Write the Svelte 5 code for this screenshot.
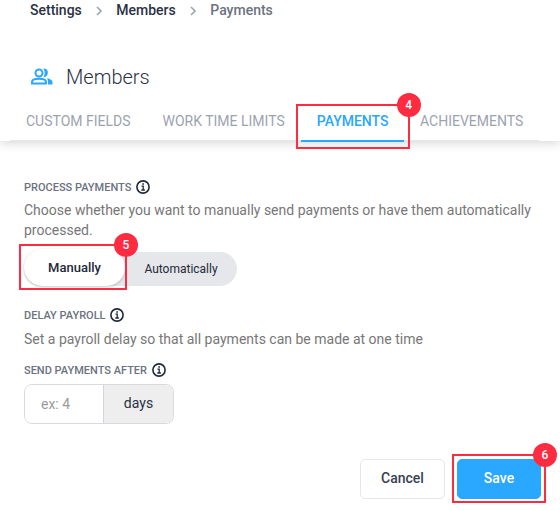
<script>
	let active = 'Payments';
	let mode = 'Manually';
	let delay = '';

	const tabs = ['Custom fields', 'Work time limits', 'Payments', 'Achievements'];
</script>

<style>
	:global(body) {
		min-height: 100vh;
		background: #fff;
		font-family: Roboto, sans-serif;
		color: #2a3244;
		overflow: hidden;
	}
	header {
		height: 141px;
		box-shadow: 0 2px 10px rgba(0,0,0,0.17);
	}
	.breadcrumb {
		display: flex;
		align-items: center;
		height: 20px;
		padding-left: 30px;
		font-size: 14px;
		font-weight: 500;
	}
	.breadcrumb svg {
		width: 7px;
		height: 10px;
		margin: 1px 13.5px 0 14px;
	}
	.breadcrumb .current {
		color: #6b7280;
	}
	.title {
		display: flex;
		align-items: center;
		height: 28px;
		margin: 43px 0 0 30px;
	}
	.title svg {
		width: 24px;
		height: 24px;
		margin-right: 12px;
	}
	h1 {
		margin: 0;
		font-size: 20px;
		font-weight: 300;
	}
	.tabs {
		display: flex;
		height: 38px;
		width: 529px;
		margin: 11px 0 0 10px;
		border-bottom: 1px solid #e5e7eb;
	}
	.tab {
		position: relative;
		height: 40px;
		padding: 0 16px;
		border: 0;
		border-bottom: 2px solid transparent;
		box-sizing: border-box;
		background: none;
		font: 400 14px/39px Roboto, sans-serif;
		text-transform: uppercase;
		white-space: nowrap;
		color: #9ca3af;
	}
	.tab.active {
		padding-right: 15.5px;
		font-weight: 500;
		color: #2aa7ff;
		border-color: #2aa7ff;
	}
	main {
		padding: 37px 24px 0;
	}
	.label {
		display: flex;
		align-items: center;
		height: 18px;
		font-size: 11px;
		font-weight: 500;
		text-transform: uppercase;
		color: #6b7280;
	}
	.label svg {
		width: 14px;
		height: 14px;
		margin-left: 4.5px;
	}
	p {
		margin: 4px 0 0;
		font-size: 14px;
		line-height: 20px;
		color: #777;
	}
	.toggle {
		position: relative;
		display: flex;
		width: 213px;
		height: 34px;
		margin: 12px 0 20px;
		border-radius: 17px;
		background: #e5e7eb;
	}
	.toggle button {
		width: 112px;
		padding: 0;
		border: 0;
		border-radius: 17px;
		background: none;
		font: 400 12px/34px Roboto, sans-serif;
		color: #1f2937;
	}
	.toggle button.on {
		width: 101px;
		height: 37px;
		margin-top: -3px;
		border-radius: 19px;
		background: #fff;
		box-shadow: 0 1px 3px rgba(0,0,0,0.22);
		font-size: 13px;
		font-weight: 500;
	}
	.delay {
		margin-top: 5px;
	}
	.after {
		margin-top: 12px;
	}
	.field {
		display: flex;
		width: 150px;
		height: 40px;
		margin-top: 5px;
		box-sizing: border-box;
		border: 1px solid #d8dade;
		border-radius: 8px;
		overflow: hidden;
	}
	.field input {
		width: 79px;
		padding: 0 16px;
		box-sizing: border-box;
		border: 0;
		border-right: 1px solid #d1d5db;
		font: 400 14px Roboto, sans-serif;
		outline: none;
	}
	.field input::placeholder {
		color: #9b9b9b;
	}
	.field span {
		flex: 1;
		background: #eee;
		font-size: 14px;
		line-height: 37px;
		text-align: center;
	}
	.actions {
		display: flex;
		justify-content: flex-end;
		gap: 12px;
		margin: 35px -5px 0 0;
	}
	.btn {
		width: 85px;
		height: 40px;
		padding: 0 0 2px;
		box-sizing: border-box;
		border: 1px solid #e5e7eb;
		border-radius: 5px;
		background: #fff;
		font: 500 14px Roboto, sans-serif;
		color: #374151;
	}
	.btn.primary {
		width: 84px;
		border-color: #2aa7ff;
		background: #2aa7ff;
		color: #fff;
	}

	.anchor {
		position: relative;
		display: flex;
	}
	/* numbered callouts laid over the controls */
	.mark {
		position: absolute;
		box-sizing: border-box;
		border: 2px solid #ff2b41;
		pointer-events: none;
		z-index: 2;
	}
	.mark b {
		position: absolute;
		top: -13px;
		right: -13px;
		width: 24px;
		height: 24px;
		border-radius: 50%;
		background: #ff2b41;
		color: #fff;
		font-size: 12px;
		font-weight: 500;
		line-height: 24px;
		text-align: center;
	}
	.mark.tabMark {
		top: 2px;
		left: -5px;
		width: 114px;
		height: 45px;
	}
	.mark.toggleMark {
		top: -8px;
		left: -5px;
		width: 108px;
		height: 46px;
	}
	.mark.saveMark {
		top: -5px;
		left: -5px;
		width: 94px;
		height: 49px;
	}
</style>

{#snippet chevron()}
	<svg viewBox="0 0 7 10" fill="none" stroke="#9ca3af" stroke-width="1.6"><path d="M1 1l4 4-4 4"/></svg>
{/snippet}

{#snippet info()}
	<svg viewBox="0 0 14 14" fill="none" stroke="#1f2937">
		<circle cx="7" cy="7" r="6.1" stroke-width="1.6"/>
		<path d="M5.5 6.2h1.7v3.6M5.3 10h3.6" stroke-width="1.3"/>
		<path d="M6.3 3.2h1.6v1.6H6.3z" fill="#1f2937" stroke="none"/>
	</svg>
{/snippet}

<header>
	<nav class="breadcrumb">
		<span>Settings</span>
		{@render chevron()}
		<span>Members</span>
		{@render chevron()}
		<span class="current">Payments</span>
	</nav>
	<div class="title">
		<svg viewBox="0 0 24 24" fill="none" stroke="#2aa7ff" stroke-width="2">
			<circle cx="9" cy="8" r="3.5"/>
			<path d="M2 18.500v-1.500c0-2.100 3.500-3.200 7-3.200s7 1.100 7 3.200v1.500z"/>
			<path d="M13.300 3.700c6-1.300 6.200 9.100 0 8.600 1.900-2.400 1.900-6.200 0-8.600zM17 13.200c3.300.6 5.500 1.900 5.500 4.100v2.200H18v-2.300c0-1.600-.3-2.800-1-4z" fill="#2aa7ff" stroke="none"/>
		</svg>
		<h1>Members</h1>
	</div>
	<div class="tabs">
		{#each tabs as tab}
			<div class="anchor">
				<button class="tab" class:active="{active === tab}" on:click={() => active = tab}>{tab}</button>
				{#if tab === 'Payments'}
					<div class="mark tabMark"><b>4</b></div>
				{/if}
			</div>
		{/each}
	</div>
</header>

<main>
	<div class="label">Process payments {@render info()}</div>
	<p>Choose whether you want to manually send payments or have them automatically processed.</p>
	<div class="toggle">
		<button class:on="{mode === 'Manually'}" on:click={() => mode = 'Manually'}>Manually</button>
		<button class:on="{mode === 'Automatically'}" on:click={() => mode = 'Automatically'}>Automatically</button>
		<div class="mark toggleMark"><b>5</b></div>
	</div>

	<div class="label">Delay payroll {@render info()}</div>
	<p class="delay">Set a payroll delay so that all payments can be made at one time</p>

	<div class="label after">Send payments after {@render info()}</div>
	<div class="field">
		<input type="text" placeholder="ex: 4" bind:value={delay} />
		<span>days</span>
	</div>

	<div class="actions">
		<button class="btn">Cancel</button>
		<div class="anchor">
			<button class="btn primary">Save</button>
			<div class="mark saveMark"><b>6</b></div>
		</div>
	</div>
</main>
